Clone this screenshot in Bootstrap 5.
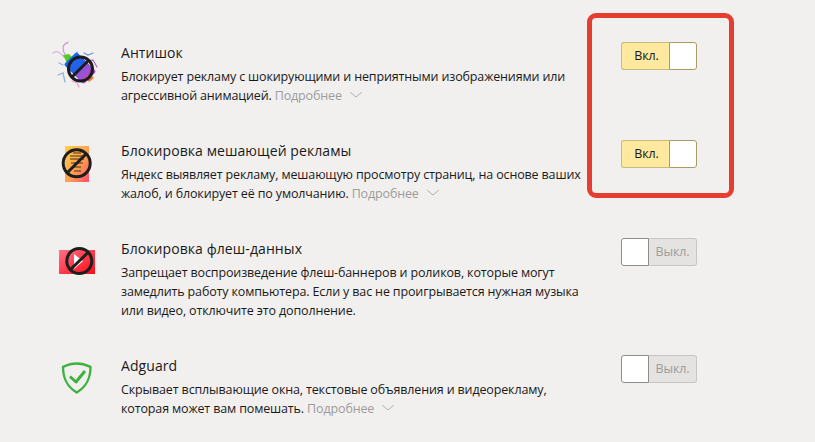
<!DOCTYPE html>
<html lang="ru">
<head>
<meta charset="utf-8">
<title>Дополнения</title>
<link href="https://cdn.jsdelivr.net/npm/bootstrap@5.3.0/dist/css/bootstrap.min.css" rel="stylesheet">
<style>
html,body{height:100%;}
body{background:#f2f0ef;color:#1a1a1a;font-family:"Open Sans","Noto Sans","Liberation Sans",sans-serif;overflow:hidden;position:relative;}
.addons{padding:42px 0 0 50px;width:697px;}
.addon{margin-bottom:35px;}
.addon-icon{width:46px;flex:none;margin-right:25px;margin-top:-2px;}
.addon-icon svg{display:block;overflow:visible;}
.addon-body{width:462px;flex:none;}
.addon-title{font-size:14px;line-height:22px;margin:0 0 3px;font-weight:400;letter-spacing:.08px;}
.addon-text{font-size:12.5px;line-height:19px;margin:0;letter-spacing:-.14px;}
.more{color:#9c9c9c;}
.more svg{margin-left:7px;vertical-align:2px;}
.switcher{width:76px;height:28px;flex:none;font-size:12.5px;line-height:26px;text-align:center;letter-spacing:-.1px;}
.sw-on .sw-label{width:48px;padding-left:2px;background:#ffe99e;border:1px solid #c9bb78;border-right:0;border-radius:3px 0 0 3px;color:#1a1a1a;}
.sw-on .sw-knob{width:28px;background:#fff;border:1px solid #a99b62;border-radius:0 3px 3px 0;}
.sw-off .sw-label{width:48px;background:#e5e3e2;border:1px solid #c8c6c5;border-left:0;border-radius:0 3px 3px 0;color:#9c9c9c;}
.sw-off .sw-knob{width:28px;background:#fff;border:1px solid #8f8e8d;border-radius:3px 0 0 3px;}
.highlight{position:absolute;left:587px;top:13px;width:147px;height:185px;border:5px solid #e53e30;border-radius:9px;pointer-events:none;}
</style>
</head>
<body>
<div class="addons">
  <div class="addon d-flex align-items-start">
    <div class="addon-icon">
      <svg width="46" height="46" viewBox="0 0 46 46" fill="none">
        <defs><linearGradient id="bug" x1="0" y1="0" x2="1" y2="0"><stop offset="0" stop-color="#1668f0"/><stop offset=".5" stop-color="#2a5ee8"/><stop offset=".55" stop-color="#8a55dc"/><stop offset="1" stop-color="#b44cc4"/></linearGradient></defs>
        <g stroke-width="1.3" stroke-linecap="round">
          <path d="M15 14C12 10 12 4 18 2.500" stroke="#c99fdc"/>
          <path d="M3 13C6 10 10 12 14 17" stroke="#d8b0e8"/>
          <path d="M34 13 38 15 43 13" stroke="#6f8fe6"/>
          <path d="M39 21 43 20 47 27" stroke="#b06fc8"/>
          <path d="M9 23 13 25M8 35 13 33 15 42" stroke="#8fb4e0"/>
          <path d="M22 41 27 43 29 47" stroke="#e6a0d0"/>
          <path d="M27 12 28 15" stroke="#88b8a8"/>
        </g>
        <path d="M13 15 19 14 23 18 17 23Z" fill="#55cc22"/>
        <rect x="16" y="19" width="28" height="18" rx="2" fill="url(#bug)" transform="rotate(45 30 28)"/>
        <path d="M36 38 40 34 44 38 39 42Z" fill="#f0792a"/>
        <circle cx="30.500" cy="29" r="12" stroke="#1c1c1c" stroke-width="3"/>
        <path d="M22 37 39 20" stroke="#1c1c1c" stroke-width="3"/>
      </svg>
    </div>
    <div class="addon-body">
      <h6 class="addon-title">Антишок</h6>
      <p class="addon-text">Блокирует рекламу с шокирующими и неприятными изображениями или агрессивной анимацией. <span class="more">Подробнее<svg width="14" height="7" viewBox="0 0 14 7" fill="none"><path d="M1 1 7 6 13 1" stroke="#b0b0b0"/></svg></span></p>
    </div>
    <div class="switcher sw-on d-flex ms-auto"><div class="sw-label">Вкл.</div><div class="sw-knob"></div></div>
  </div>

  <div class="addon d-flex align-items-start">
    <div class="addon-icon">
      <svg width="46" height="46" viewBox="0 0 46 46" fill="none">
        <defs><linearGradient id="ad" x1="0" y1="0" x2="1" y2="1"><stop offset="0" stop-color="#ffd24a"/><stop offset=".6" stop-color="#ff9a50"/><stop offset="1" stop-color="#ff4a70"/></linearGradient></defs>
        <rect x="15" y="8" width="24" height="36" fill="url(#ad)"/>
        <path d="M23 15H31M20 18H34M20 21H34M21 25H33M23 29H31M24 33H31" stroke="#5a3c1c" stroke-width="1.500" opacity=".75"/>
        <circle cx="26.700" cy="25.300" r="13.500" stroke="#1e1e1e" stroke-width="3"/>
        <path d="M17 35 36.500 15.500" stroke="#1e1e1e" stroke-width="3"/>
      </svg>
    </div>
    <div class="addon-body">
      <h6 class="addon-title">Блокировка мешающей рекламы</h6>
      <p class="addon-text">Яндекс выявляет рекламу, мешающую просмотру страниц, на основе ваших жалоб, и блокирует её по умолчанию. <span class="more">Подробнее<svg width="14" height="7" viewBox="0 0 14 7" fill="none"><path d="M1 1 7 6 13 1" stroke="#b0b0b0"/></svg></span></p>
    </div>
    <div class="switcher sw-on d-flex ms-auto"><div class="sw-label">Вкл.</div><div class="sw-knob"></div></div>
  </div>

  <div class="addon d-flex align-items-start">
    <div class="addon-icon">
      <svg width="46" height="46" viewBox="0 0 46 46" fill="none">
        <defs><linearGradient id="fl" x1="0" y1="0" x2="1" y2="1"><stop offset="0" stop-color="#ff7088"/><stop offset="1" stop-color="#ff0a14"/></linearGradient></defs>
        <rect x="9" y="14" width="36" height="24" fill="url(#fl)"/>
        <path d="M24 18 33 25 24 33Z" fill="#fff"/>
        <circle cx="29.300" cy="25" r="12.500" stroke="#1e1e1e" stroke-width="3"/>
        <path d="M19.500 34.500 39 15.500" stroke="#1e1e1e" stroke-width="3"/>
      </svg>
    </div>
    <div class="addon-body">
      <h6 class="addon-title">Блокировка флеш-данных</h6>
      <p class="addon-text">Запрещает воспроизведение флеш-баннеров и роликов, которые могут замедлить работу компьютера. Если у вас не проигрывается нужная музыка или видео, отключите это дополнение.</p>
    </div>
    <div class="switcher sw-off d-flex ms-auto"><div class="sw-knob"></div><div class="sw-label">Выкл.</div></div>
  </div>

  <div class="addon d-flex align-items-start">
    <div class="addon-icon">
      <svg width="46" height="46" viewBox="0 0 46 46" fill="none">
        <path d="M26.700 10.500C22 10.500 17.500 11.800 13 13.800C13 26 17 33.500 26.700 39.500C36.500 33.500 40.500 26 40.500 13.800C36 11.800 31.500 10.500 26.700 10.500Z" stroke="#3eb23e" stroke-width="2.400" stroke-linejoin="round"/>
        <path d="M20 23.500 26 29 35 18" stroke="#3eb23e" stroke-width="3" stroke-linejoin="round"/>
      </svg>
    </div>
    <div class="addon-body">
      <h6 class="addon-title">Adguard</h6>
      <p class="addon-text">Скрывает всплывающие окна, текстовые объявления и видеорекламу, которая может вам помешать. <span class="more">Подробнее<svg width="14" height="7" viewBox="0 0 14 7" fill="none"><path d="M1 1 7 6 13 1" stroke="#b0b0b0"/></svg></span></p>
    </div>
    <div class="switcher sw-off d-flex ms-auto"><div class="sw-knob"></div><div class="sw-label">Выкл.</div></div>
  </div>
</div>
<div class="highlight"></div>
<script src="https://cdn.jsdelivr.net/npm/bootstrap@5.3.0/dist/js/bootstrap.bundle.min.js"></script>
</body>
</html>
